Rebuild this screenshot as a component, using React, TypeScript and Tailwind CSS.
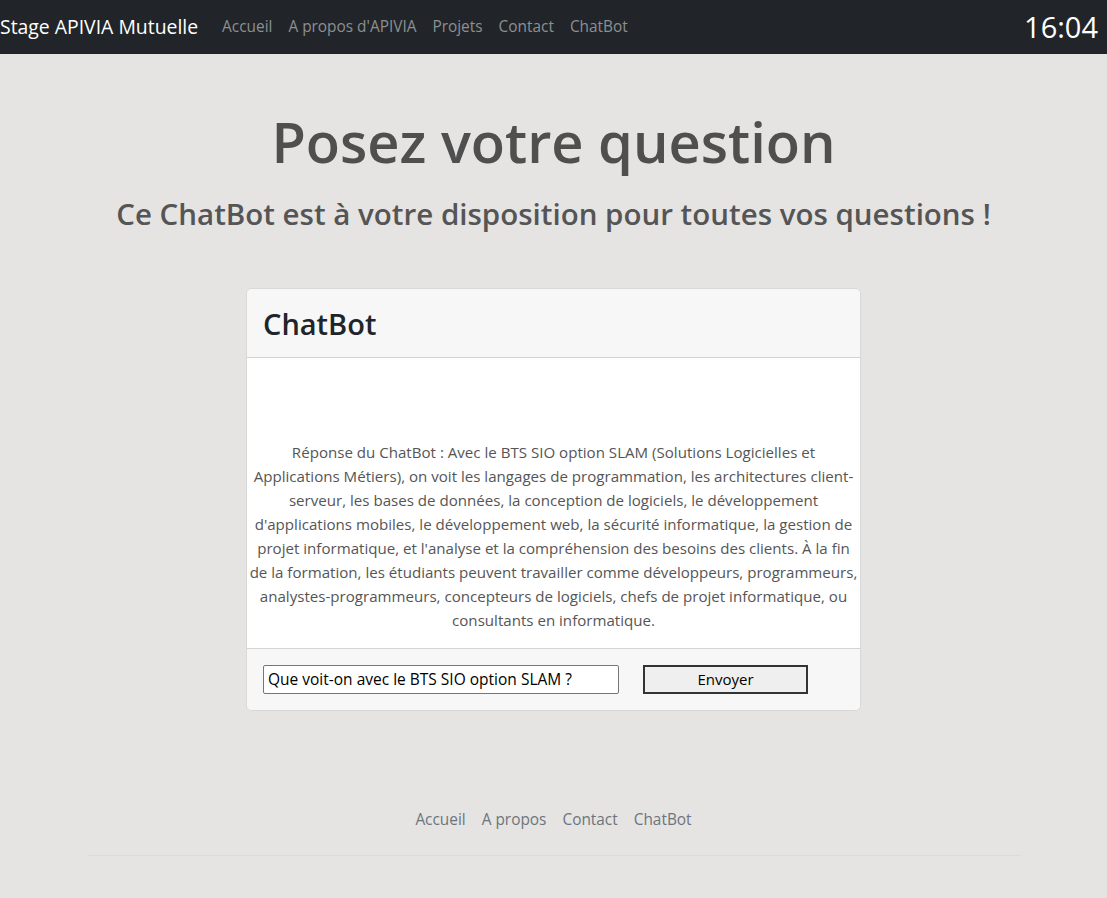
import React from "react";

const lines = [
  "Réponse du ChatBot : Avec le BTS SIO option SLAM (Solutions Logicielles et",
  "Applications Métiers), on voit les langages de programmation, les architectures client-",
  "serveur, les bases de données, la conception de logiciels, le développement",
  "d'applications mobiles, le développement web, la sécurité informatique, la gestion de",
  "projet informatique, et l'analyse et la compréhension des besoins des clients. À la fin",
  "de la formation, les étudiants peuvent travailler comme développeurs, programmeurs,",
  "analystes-programmeurs, concepteurs de logiciels, chefs de projet informatique, ou",
  "consultants en informatique.",
];

export default function App() {
  const font = { fontFamily: '"Open Sans", "Noto Sans", sans-serif' };
  return (
    <div className="min-h-[898px] bg-[#e5e4e2]" style={font}>
      <nav className="flex h-[54px] items-center bg-[#212529]">
        <span className="mr-4 text-[19.4px] text-white">Stage APIVIA Mutuelle</span>
        <div className="flex text-[15.4px] text-[#8d8f91]">
          <span className="px-2">Accueil</span>
          <span className="px-2">A propos d'APIVIA</span>
          <span className="px-2">Projets</span>
          <span className="px-2">Contact</span>
          <span className="px-2">ChatBot</span>
        </div>
        <span className="ml-auto mr-[9px] text-[29px] text-white">16:04</span>
      </nav>
      <main className="text-center">
        <h1 className="pt-[54px] text-[56px] font-semibold leading-[1.2] text-[#4f4f4f]">Posez votre question</h1>
        <h2 className="mt-[21px] text-[29.5px] font-semibold leading-[1.2] text-[#555]">
          Ce ChatBot est à votre disposition pour toutes vos questions !
        </h2>
        <div className="mx-auto mt-[56px] w-[615px] overflow-hidden rounded-[6px] border border-[#d8d8d8] bg-white text-left">
          <div className="flex h-[69px] items-center border-b border-[#d3d3d3] bg-[#f7f7f7] px-4">
            <h3 className="mt-[2px] text-[29px] font-semibold text-[#212529]">ChatBot</h3>
          </div>
          <div className="flex flex-col items-center pb-4 pt-[82px] text-center text-[15.1px] leading-[24px] text-[#555]">
            {lines.map((l, i) => (
              <span key={i} className="whitespace-nowrap">
                {l}
              </span>
            ))}
          </div>
          <div className="flex h-[62px] items-center border-t border-[#d3d3d3] bg-[#f7f7f7] px-4">
            <input
              readOnly
              value="Que voit-on avec le BTS SIO option SLAM ?"
              className="h-[29px] w-[356px] rounded-[2px] border border-[#767676] bg-white px-1 text-[15.5px] text-black"
              style={font}
            />
            <button
              className="ml-[24px] h-[29px] w-[165px] border-2 border-[#333] bg-[#efefef] text-[15px] text-black"
              style={font}
            >
              Envoyer
            </button>
          </div>
        </div>
        <footer className="mt-[97px]">
          <div className="flex justify-center text-[15.4px] text-[#6c757d]">
            <span className="px-2">Accueil</span>
            <span className="px-2">A propos</span>
            <span className="px-2">Contact</span>
            <span className="px-2">ChatBot</span>
          </div>
          <div className="mx-auto mt-[24px] w-[934px] border-t border-[#dddadc]" />
        </footer>
      </main>
    </div>
  );
}
